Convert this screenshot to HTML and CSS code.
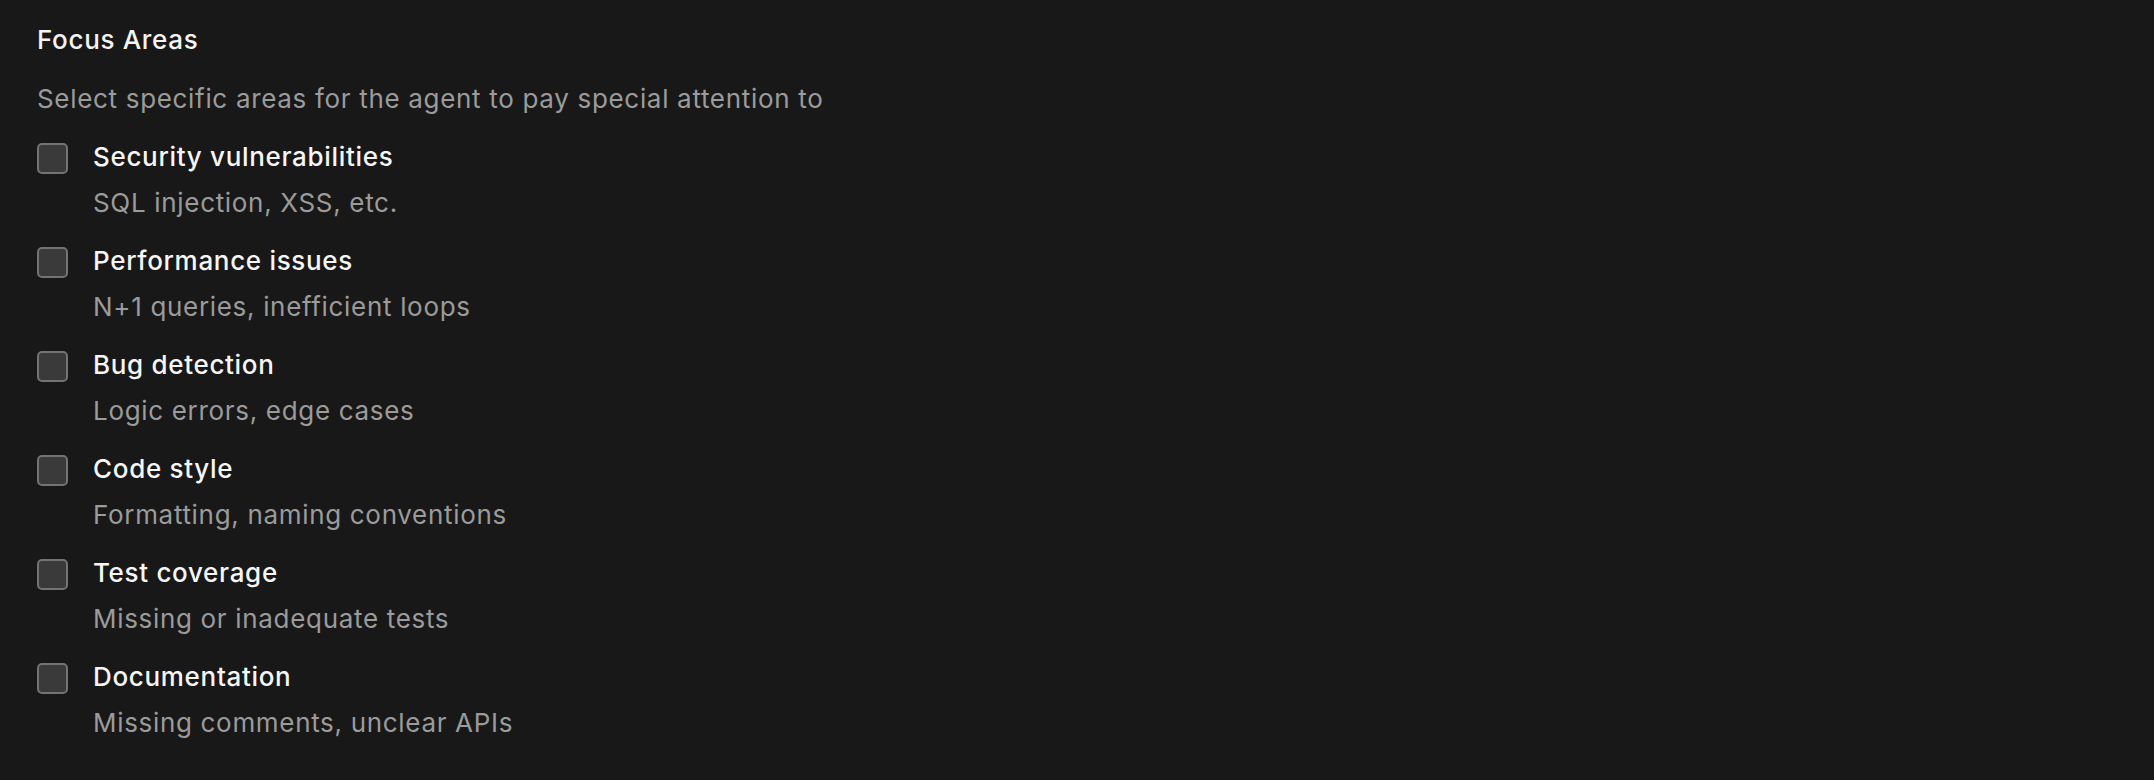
FILE: index.html
```html
<!DOCTYPE html>
<html lang="en">
<head>
<meta charset="utf-8">
<title>Focus Areas</title>
<link rel="stylesheet" href="styles.css">
</head>
<body>
<section class="focus">
  <h2 class="focus-title">Focus Areas</h2>
  <p class="focus-sub">Select specific areas for the agent to pay special attention to</p>
  <ul class="focus-list">
    <li class="focus-item">
      <span class="box"></span>
      <div class="text"><div class="label">Security vulnerabilities</div><div class="desc">SQL injection, XSS, etc.</div></div>
    </li>
    <li class="focus-item">
      <span class="box"></span>
      <div class="text"><div class="label">Performance issues</div><div class="desc">N+1 queries, inefficient loops</div></div>
    </li>
    <li class="focus-item">
      <span class="box"></span>
      <div class="text"><div class="label">Bug detection</div><div class="desc">Logic errors, edge cases</div></div>
    </li>
    <li class="focus-item">
      <span class="box"></span>
      <div class="text"><div class="label">Code style</div><div class="desc">Formatting, naming conventions</div></div>
    </li>
    <li class="focus-item">
      <span class="box"></span>
      <div class="text"><div class="label">Test coverage</div><div class="desc">Missing or inadequate tests</div></div>
    </li>
    <li class="focus-item">
      <span class="box"></span>
      <div class="text"><div class="label">Documentation</div><div class="desc">Missing comments, unclear APIs</div></div>
    </li>
  </ul>
</section>
</body>
</html>
```
FILE: styles.css
```css
html, body {
  margin: 0;
  padding: 0;
  background: #181818;
}
body {
  font-family: Inter, "Noto Sans", sans-serif;
  font-size: 26px;
  line-height: 36px;
  letter-spacing: 0.68px;
  color: #f2f2f2;
}
.focus {
  padding: 22px 37px;
}
.focus-title {
  margin: 0;
  font-size: 26px;
  font-weight: 500;
  line-height: 36px;
  color: #f4f4f4;
}
.focus-sub {
  margin: 23px 0 0;
  color: #9b9b9b;
}
.focus-list {
  list-style: none;
  margin: 22px 0 0;
  padding: 0;
  display: flex;
  flex-direction: column;
  gap: 22px;
}
.focus-item {
  display: flex;
  align-items: flex-start;
  gap: 25px;
}
.box {
  flex: none;
  width: 27px;
  height: 27px;
  margin-top: 4px;
  border: 2px solid #737373;
  border-radius: 5px;
  background: #3a3a3a;
}
.text {
  display: flex;
  flex-direction: column;
  gap: 10px;
}
.label {
  font-weight: 500;
  color: #f6f6f6;
}
.desc {
  color: #9b9b9b;
}
```
